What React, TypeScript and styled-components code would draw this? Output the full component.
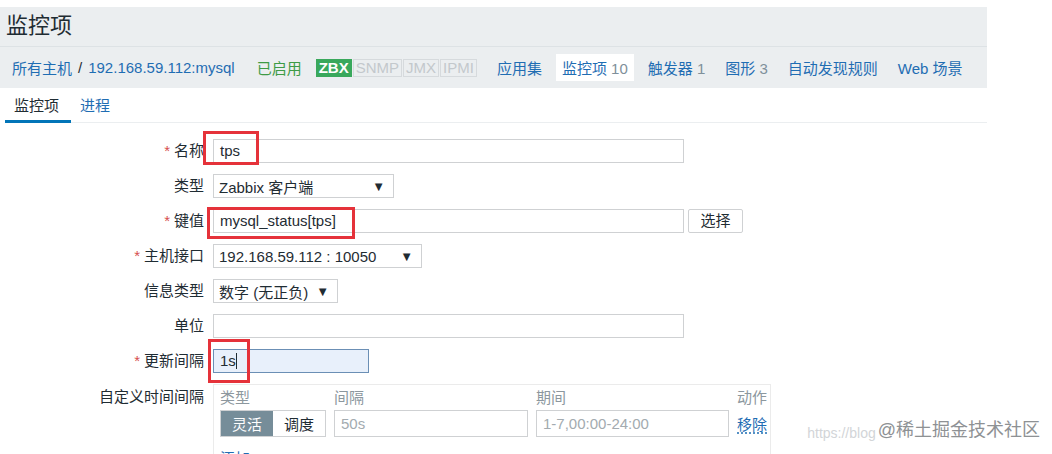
import React from 'react'
import styled, { createGlobalStyle, css } from 'styled-components'

const GlobalStyle = createGlobalStyle`
  body {
    margin: 0;
    background: #ffffff;
    font-family: "Liberation Sans", "Noto Sans CJK SC", sans-serif;
    color: #1f2c33;
  }
`

const LINK = '#1f6db3'

const Page = styled.div`
  position: relative;
  width: 1052px;
  height: 454px;
  overflow: hidden;
  padding-top: 7px;
  box-sizing: border-box;
`

const Header = styled.div`
  width: 987px;
  background: #ebeef0;
`

const Title = styled.h1`
  margin: 0;
  height: 39px;
  line-height: 38px;
  padding-left: 6px;
  font-size: 22px;
  font-weight: 400;
  color: #1f2c33;
  border-bottom: 1px solid #dde2e5;
`

const NavBar = styled.div`
  display: flex;
  align-items: center;
  height: 41px;
  padding-left: 12px;
  font-size: 15px;
`

const Crumbs = styled.div`
  display: flex;
  align-items: center;
  gap: 6px;
  margin-right: 22px;
`

const NavLink = styled.span`
  color: ${LINK};
`

const Sep = styled.span`
  color: #1f2c33;
`

const Status = styled.span`
  color: #3e9b45;
  margin-right: 14px;
`

const Badges = styled.div`
  display: flex;
  gap: 1px;
  margin-right: 14px;
`

const Badge = styled.span<{ $on?: boolean }>`
  font-size: 15px;
  line-height: 16px;
  padding: 0 2px;
  border: 1px solid #d6dadd;
  color: #c3c8cc;
  ${({ $on }) =>
    $on &&
    css`
      background: #39a85c;
      border-color: #39a85c;
      color: #ffffff;
      font-weight: 700;
    `}
`

const NavItem = styled.span<{ $current?: boolean }>`
  color: ${LINK};
  padding: 3px 6px;
  margin-right: 8px;
  background: ${({ $current }) => ($current ? '#ffffff' : 'transparent')};
`

const Count = styled.span`
  color: #7f909b;
`

const Panel = styled.div`
  width: 982px;
  margin-left: 5px;
`

const Tabs = styled.div`
  display: flex;
  height: 34px;
  border-bottom: 1px solid #ebeef0;
`

const Tab = styled.span<{ $active?: boolean }>`
  display: flex;
  align-items: center;
  padding: 0 12px 0 9px;
  font-size: 15px;
  margin-bottom: -1px;
  color: ${({ $active }) => ($active ? '#1f2c33' : LINK)};
  border-bottom: 3px solid ${({ $active }) => ($active ? '#0275b8' : 'transparent')};
`

const Form = styled.div`
  display: grid;
  grid-template-columns: 199px 1fr;
  column-gap: 9px;
  row-gap: 11px;
  padding-top: 16px;
  font-size: 15px;
`

const Label = styled.div<{ $top?: boolean }>`
  text-align: right;
  line-height: 24px;
  padding-top: ${({ $top }) => ($top ? '1px' : '0')};
  white-space: nowrap;
`

const Req = styled.span`
  color: #d64e4e;
  margin-right: 4px;
`

const Field = styled.div`
  display: flex;
  align-items: center;
  gap: 4px;
`

const Wrap = styled.div`
  position: relative;
`

const TextBox = styled.div<{ $w: number; $focus?: boolean }>`
  width: ${({ $w }) => $w}px;
  height: 24px;
  box-sizing: border-box;
  border: 1px solid ${({ $focus }) => ($focus ? '#6b8fb5' : '#cfd1d3')};
  background: ${({ $focus }) => ($focus ? '#e8f0fb' : '#ffffff')};
  padding: 0 6px;
  line-height: 22px;
  font-size: 15px;
  color: #1f2c33;
  white-space: nowrap;
`

const Caret = styled.span`
  display: inline-block;
  width: 1px;
  height: 16px;
  background: #1f2c33;
  vertical-align: -3px;
`

const Select = styled.div<{ $w: number }>`
  width: ${({ $w }) => $w}px;
  height: 24px;
  box-sizing: border-box;
  border: 1px solid #cfd1d3;
  display: flex;
  align-items: center;
  justify-content: space-between;
  padding: 0 8px 0 5px;
  font-size: 15px;
  white-space: nowrap;
`

const Arrow = styled.span`
  font-size: 13px;
  color: #1f2c33;
`

const Button = styled.div`
  width: 55px;
  height: 24px;
  box-sizing: border-box;
  border: 1px solid #cfd1d3;
  border-radius: 2px;
  text-align: center;
  line-height: 22px;
  font-size: 15px;
  background: #ffffff;
`

const Mark = styled.div<{ $l: number; $t: number; $w: number; $h: number }>`
  position: absolute;
  left: ${({ $l }) => $l}px;
  top: ${({ $t }) => $t}px;
  width: ${({ $w }) => $w}px;
  height: ${({ $h }) => $h}px;
  border: 3px solid #e5323a;
  box-sizing: border-box;
  pointer-events: none;
`

const IntervalBox = styled.div`
  width: 558px;
  height: 80px;
  box-sizing: border-box;
  border: 1px solid #ebebeb;
  padding: 2px 3px 0 6px;
`

const IntervalGrid = styled.div`
  display: grid;
  grid-template-columns: 106px 194px 193px 1fr;
  column-gap: 8px;
  row-gap: 1px;
  align-items: center;
`

const Head = styled.div<{ $right?: boolean }>`
  color: #8c979e;
  font-size: 15px;
  line-height: 22px;
  white-space: nowrap;
  text-align: ${({ $right }) => ($right ? 'right' : 'left')};
`

const Segmented = styled.div`
  display: flex;
  height: 27px;
  border: 1px solid #cfd1d3;
  box-sizing: border-box;
`

const Segment = styled.span<{ $on?: boolean }>`
  flex: 1;
  display: flex;
  align-items: center;
  justify-content: center;
  font-size: 15px;
  background: ${({ $on }) => ($on ? '#768d99' : '#ffffff')};
  color: ${({ $on }) => ($on ? '#ffffff' : '#1f2c33')};
`

const Placeholder = styled.div`
  height: 27px;
  box-sizing: border-box;
  border: 1px solid #cfd1d3;
  padding: 0 6px;
  line-height: 25px;
  color: #a3abb0;
  font-size: 15px;
`

const Remove = styled.span`
  color: ${LINK};
  text-align: right;
  font-size: 15px;
  white-space: nowrap;
  text-decoration: underline dotted;
  text-underline-offset: 3px;
`

const Add = styled.div`
  margin-top: 10px;
  color: ${LINK};
  font-size: 15px;
`

const Watermark = styled.div`
  position: absolute;
  right: 12px;
  bottom: 13px;
  display: flex;
  align-items: flex-end;
  white-space: nowrap;
`

const WaterUrl = styled.span`
  font-size: 14px;
  color: #d2d5d8;
  margin-right: 2px;
`

const WaterBrand = styled.span`
  font-size: 18px;
  color: #8e9194;
  text-shadow: 0 0 2px #ffffff;
`

export default function App() {
  return (
    <Page>
      <GlobalStyle />
      <Header>
        <Title>监控项</Title>
        <NavBar>
          <Crumbs>
            <NavLink>所有主机</NavLink>
            <Sep>/</Sep>
            <NavLink>192.168.59.112:mysql</NavLink>
          </Crumbs>
          <Status>已启用</Status>
          <Badges>
            <Badge $on>ZBX</Badge>
            <Badge>SNMP</Badge>
            <Badge>JMX</Badge>
            <Badge>IPMI</Badge>
          </Badges>
          <NavItem>应用集</NavItem>
          <NavItem $current>
            监控项 <Count>10</Count>
          </NavItem>
          <NavItem>
            触发器 <Count>1</Count>
          </NavItem>
          <NavItem>
            图形 <Count>3</Count>
          </NavItem>
          <NavItem>自动发现规则</NavItem>
          <NavItem>Web 场景</NavItem>
        </NavBar>
      </Header>

      <Panel>
        <Tabs>
          <Tab $active>监控项</Tab>
          <Tab>进程</Tab>
        </Tabs>

        <Form>
          <Label>
            <Req>*</Req>名称
          </Label>
          <Field>
            <Wrap>
              <TextBox $w={471}>tps</TextBox>
              <Mark $l={-10} $t={-8} $w={56} $h={34} />
            </Wrap>
          </Field>

          <Label>类型</Label>
          <Field>
            <Select $w={181}>
              Zabbix 客户端<Arrow>▼</Arrow>
            </Select>
          </Field>

          <Label>
            <Req>*</Req>键值
          </Label>
          <Field>
            <Wrap>
              <TextBox $w={471}>mysql_status[tps]</TextBox>
              <Mark $l={-6} $t={-2} $w={148} $h={32} />
            </Wrap>
            <Button>选择</Button>
          </Field>

          <Label>
            <Req>*</Req>主机接口
          </Label>
          <Field>
            <Select $w={209}>
              192.168.59.112 : 10050<Arrow>▼</Arrow>
            </Select>
          </Field>

          <Label>信息类型</Label>
          <Field>
            <Select $w={125}>
              数字 (无正负)<Arrow>▼</Arrow>
            </Select>
          </Field>

          <Label>单位</Label>
          <Field>
            <TextBox $w={471} />
          </Field>

          <Label>
            <Req>*</Req>更新间隔
          </Label>
          <Field>
            <Wrap>
              <TextBox $w={156} $focus>
                1s<Caret />
              </TextBox>
              <Mark $l={-5} $t={-10} $w={42} $h={44} />
            </Wrap>
          </Field>

          <Label $top>自定义时间间隔</Label>
          <IntervalBox>
            <IntervalGrid>
              <Head>类型</Head>
              <Head>间隔</Head>
              <Head>期间</Head>
              <Head $right>动作</Head>
              <Segmented>
                <Segment $on>灵活</Segment>
                <Segment>调度</Segment>
              </Segmented>
              <Placeholder>50s</Placeholder>
              <Placeholder>1-7,00:00-24:00</Placeholder>
              <Remove>移除</Remove>
            </IntervalGrid>
            <Add>添加</Add>
          </IntervalBox>
        </Form>
      </Panel>

      <Watermark>
        <WaterUrl>https://blog</WaterUrl>
        <WaterBrand>@稀土掘金技术社区</WaterBrand>
      </Watermark>
    </Page>
  )
}
